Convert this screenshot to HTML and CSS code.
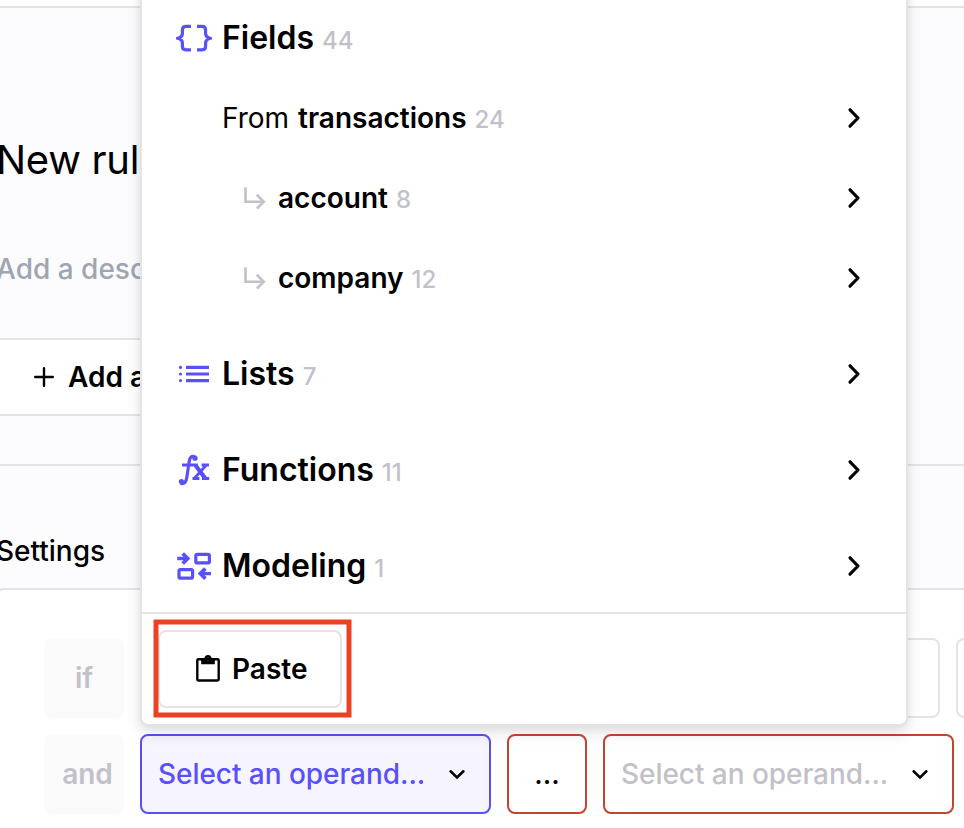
FILE: index.html
```html
<!DOCTYPE html>
<html lang="en">
<head>
<meta charset="utf-8">
<title>New rule</title>
<link rel="stylesheet" href="styles.css">
</head>
<body>
<svg class="defs" width="0" height="0">
  <symbol id="right" viewBox="0 0 24 24"><path d="M8 3.8 16 12l-8 8.2" fill="none" stroke="currentColor" stroke-width="3.2" stroke-linecap="round" stroke-linejoin="round"/></symbol>
  <symbol id="down" viewBox="0 0 24 24"><path d="M5.6 9.3 12 15.4l6.4-6.1" fill="none" stroke="currentColor" stroke-width="2.6" stroke-linecap="round"/></symbol>
  <symbol id="sub" viewBox="0 0 24 24"><path d="M3.5 1.3V15.7H21M14.8 8.8 21.8 15.7l-7 7" fill="none" stroke="currentColor" stroke-width="2.6"/></symbol>
</svg>
<div class="page">
  <div class="topbar"></div>
  <header class="intro">
    <h1 class="title">New rul</h1>
    <p class="desc">Add a desc</p>
    <div class="add">
      <svg width="20" height="20" viewBox="0 0 20 20"><path d="M10 1.2v17.6M1.2 10h17.6" stroke="currentColor" stroke-width="2.4" stroke-linecap="round"/></svg>
      <span>Add a</span>
    </div>
  </header>
  <main class="settings">
    <h2 class="heading">Settings</h2>
    <section class="card">
      <div class="row">
        <div class="word">if</div>
        <div class="box wide"></div>
        <div class="box next"></div>
      </div>
      <div class="row">
        <div class="word and">and</div>
        <div class="select active"><span>Select an operand...</span><svg class="down"><use href="#down"/></svg></div>
        <div class="operator">...</div>
        <div class="select invalid"><span>Select an operand...</span><svg class="down"><use href="#down"/></svg></div>
      </div>
    </section>
  </main>
</div>
<div class="menu">
  <div class="item first">
    <svg class="icon" viewBox="0 0 36 36"><path d="M15 6.4H10Q6.4 6.4 6.4 10V13.5Q6.4 17 1.8 18.3Q6.4 19.6 6.4 23V26.2Q6.4 29.8 10 29.8H15M21 6.4H26Q29.6 6.4 29.6 10V13.5Q29.6 17 34.2 18.3Q29.6 19.6 29.6 23V26.2Q29.6 29.8 26 29.8H21" fill="none" stroke="currentColor" stroke-width="3.2"/></svg>
    <div class="label"><b>Fields</b><span class="count">44</span></div>
  </div>
  <div class="item small">
    <div class="label"><span class="from">From</span><b>transactions</b><span class="count">24</span></div>
    <svg class="right"><use href="#right"/></svg>
  </div>
  <div class="item small nested">
    <svg class="sub"><use href="#sub"/></svg>
    <div class="label"><b>account</b><span class="count">8</span></div>
    <svg class="right"><use href="#right"/></svg>
  </div>
  <div class="item small nested last">
    <svg class="sub"><use href="#sub"/></svg>
    <div class="label"><b>company</b><span class="count">12</span></div>
    <svg class="right"><use href="#right"/></svg>
  </div>
  <div class="item">
    <svg class="icon" viewBox="0 0 36 36"><path d="M10 11.4h23M10 18h23M10 24.6h23" stroke="currentColor" stroke-width="3.1"/><g fill="currentColor"><circle cx="4.5" cy="11.4" r="1.6"/><circle cx="4.5" cy="18" r="1.6"/><circle cx="4.5" cy="24.6" r="1.6"/></g></svg>
    <div class="label"><b>Lists</b><span class="count">7</span></div>
    <svg class="right"><use href="#right"/></svg>
  </div>
  <div class="item">
    <svg class="icon" viewBox="0 0 36 36"><g fill="none" stroke="currentColor"><path d="M19 5C15.6 3.4 13.9 5.4 13.3 9L10.7 26C10 30.5 7.6 32.6 4.6 31" stroke-width="3.2"/><path d="M6 13H21.8M25.6 13H33M16.5 26.5H23.4M26 26.5H33.2" stroke-width="3"/><path d="M19.6 13.5 29 26" stroke-width="4.2"/><path d="M30 13.5 18.2 26.5" stroke-width="2.8"/></g><circle cx="19" cy="6.2" r="2.6" fill="currentColor"/><circle cx="5.4" cy="29.5" r="2.6" fill="currentColor"/></svg>
    <div class="label"><b>Functions</b><span class="count">11</span></div>
    <svg class="right"><use href="#right"/></svg>
  </div>
  <div class="item">
    <svg class="icon" viewBox="0 0 36 36"><g fill="none" stroke="currentColor" stroke-width="3.2"><rect x="19.8" y="6.3" width="13.6" height="8.6" rx="1.5"/><rect x="3" y="21.6" width="13.6" height="8.6" rx="1.5"/><path d="M1.2 10.5H11M35 25.6H25" stroke-width="3.4"/><path d="M6.7 5.5 11.7 10.5 6.7 15.5M29.4 20.6 24.4 25.6 29.4 30.6" stroke-width="3.8"/></g></svg>
    <div class="label"><b>Modeling</b><span class="count">1</span></div>
    <svg class="right"><use href="#right"/></svg>
  </div>
  <div class="footer">
    <div class="paste">
      <svg width="24" height="28" viewBox="0 0 24 28"><rect x="1.3" y="4.3" width="21.4" height="21.2" rx="1.2" fill="none" stroke="currentColor" stroke-width="2.4"/><path fill="currentColor" fill-rule="evenodd" d="M5.2 3.3H8.2C8.8 1.2 10.2 0 12 0s3.2 1.2 3.8 3.3h3V9.2H5.2ZM12 2.7a1.4 1.4 0 1 0 0 2.8 1.4 1.4 0 0 0 0-2.8Z"/></svg>
      <span>Paste</span>
    </div>
  </div>
  <svg class="highlight" viewBox="0 0 200 100"><rect x="3" y="3" width="193" height="93" fill="none" stroke="#eb4224" stroke-width="5"/></svg>
</div>
</body>
</html>
```
FILE: styles.css
```css
* { box-sizing: border-box; }
body { margin: 0; width: 964px; height: 828px; overflow: hidden; position: relative; background: #fff; color: #000; font: 500 28px/40px Inter, sans-serif; }
h1, h2, p { margin: 0; }
svg { flex: none; display: block; }
.defs { display: none; }
.page { height: 828px; overflow: hidden; background: #fcfcfe; white-space: nowrap; }
.topbar { height: 8px; background: #fff; border-bottom: 2px solid #e4e4e7; }
.intro { height: 458px; border-bottom: 2px solid #e4e4e7; padding-top: 128px; }
.title { font-size: 40px; line-height: 48px; font-weight: 400; margin-left: -4px; letter-spacing: -.3px; }
.desc { margin: 65px 0 0 -4px; color: #9fa5b2; }
.add { width: 320px; height: 78px; margin: 49px 0 0 -6px; padding-left: 38px; border: 2px solid #e4e4e7; border-radius: 8px; background: #fff; display: flex; align-items: center; gap: 14px; font-weight: 600; }
.settings { padding-top: 65px; }
.heading { font-size: 28px; line-height: 40px; font-weight: 500; margin-left: -4px; }
.card { width: 1200px; height: 300px; margin: 17px 0 0 -4px; padding: 48px 0 0 46px; border: 2px solid #e4e4e7; border-radius: 8px; background: #fff; display: flex; flex-direction: column; gap: 16px; }
.row { display: flex; gap: 16px; }
.word { width: 80px; height: 80px; border-radius: 8px; background: #fafafa; color: #c2c1c9; font-weight: 600; text-align: center; line-height: 80px; }
.and { padding-left: 7px; }
.box { height: 80px; border: 2px solid #e4e4e7; border-radius: 8px; }
.wide { width: 800px; }
.next { width: 160px; }
.select { width: 351px; height: 80px; border: 2px solid; border-radius: 8px; display: flex; align-items: center; justify-content: space-between; padding: 0 20px 0 16px; letter-spacing: -.05px; }
.active { border-color: #5a50f0; background: #f6f5ff; color: #5a50fa; }
.invalid { border-color: #c2452f; color: #c2c1c9; }
.down { width: 24px; height: 24px; color: #000; }
.operator { width: 80px; height: 80px; border: 2px solid #c2452f; border-radius: 8px; text-align: center; line-height: 76px; }
.menu { position: absolute; left: 140px; top: -24px; width: 768px; height: 750px; padding-top: 20px; border: 2px solid #e4e4e7; border-radius: 8px; background: #fff; box-shadow: 0 8px 16px rgba(0,0,0,.09), 0 2px 8px rgba(0,0,0,.07); }
.item { height: 96px; padding: 0 40px 0 34px; display: flex; align-items: center; }
.item.first { height: 80px; }
.item.small { height: 80px; padding-left: 80px; }
.item.nested { padding-left: 100px; }
.item.last { margin-bottom: 8px; }
.icon { width: 36px; height: 36px; margin-right: 10px; color: #5a50fa; }
.label { flex: 1; display: flex; align-items: baseline; font-size: 32px; padding-top: 2px; }
.small .label { font-size: 28px; }
.label b { font-weight: 600; }
.from { font-weight: 400; margin-right: 9px; }
.count { margin-left: 8px; font-size: 24px; color: #c2c1c9; }
.sub { width: 24px; height: 24px; margin-right: 12px; color: #c2c1c9; }
.right { width: 24px; height: 24px; }
.footer { margin-top: -2px; height: 112px; border-top: 2px solid #e4e4e7; padding: 16px; }
.paste { width: 184px; height: 78px; border: 2px solid #e4e4e7; border-radius: 8px; display: flex; align-items: center; padding-left: 36px; gap: 12px; font-weight: 600; }
.highlight { position: absolute; left: 11px; top: 641px; width: 200px; height: 100px; }
```
